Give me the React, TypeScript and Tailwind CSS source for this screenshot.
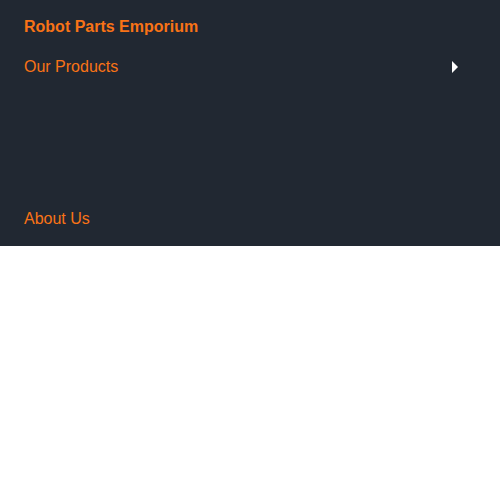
export default function App() {
  return (
    <div className="min-h-screen bg-white" style={{ fontFamily: '"Liberation Sans", Arial, sans-serif' }}>
      {/* Sidebar nav */}
      <nav className="bg-[#212832] px-6 pt-[17px] pb-[17px]">
        <h1 className="text-base leading-5 font-bold text-[#f97316]">Robot Parts Emporium</h1>
        <ul className="mt-5">
          <li className="flex items-center justify-between pr-[18px] text-base leading-5 text-[#f97316]">
            <span>Our Products</span>
            <svg width="6" height="12" viewBox="0 0 6 12" className="block">
              <path d="M0 0 L6 6 L0 12 Z" fill="#ffffff" />
            </svg>
          </li>
          <li className="h-[132px]" />
          <li className="text-base leading-5 text-[#f97316]">About Us</li>
        </ul>
      </nav>
    </div>
  );
}
